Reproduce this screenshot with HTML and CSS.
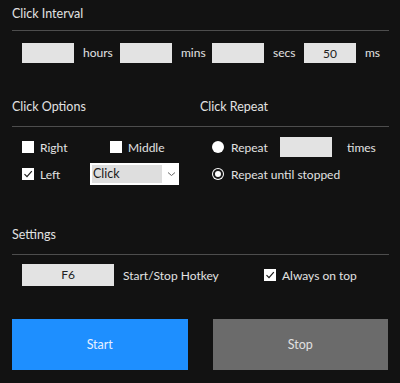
FILE: index.html
```html
<!DOCTYPE html>
<html lang="en">
<head>
    <meta charset="UTF-8">
    <meta name="viewport" content="width=device-width, initial-scale=1.0">
    <title>Auto Clicker</title>
    <link rel="stylesheet" href="styles.css">
</head>
<body>
    <div class="app">
        <div class="section-head head-first">
            <span>Click Interval</span>
        </div>

        <div class="interval-row">
            <input type="text" class="field">
            <span class="unit unit-hours">hours</span>
            <input type="text" class="field">
            <span class="unit unit-mins">mins</span>
            <input type="text" class="field">
            <span class="unit unit-secs">secs</span>
            <input type="text" class="field" value="50">
            <span class="unit">ms</span>
        </div>

        <div class="section-head head-split">
            <span class="col-left">Click Options</span>
            <span class="col-right">Click Repeat</span>
        </div>

        <div class="options">
            <div class="col-left options-col">
                <div class="opt-row row-top">
                    <label class="check check-right">
                        <span class="box"></span>
                        Right
                    </label>
                    <label class="check">
                        <span class="box"></span>
                        Middle
                    </label>
                </div>
                <div class="opt-row row-bottom">
                    <label class="check check-left">
                        <span class="box checked">
                            <svg width="12" height="12" viewBox="0 0 12 12"><polyline points="2.5,6.2 5,8.7 9.8,3.2" fill="none" stroke="#1a1a1a" stroke-width="1.2"/></svg>
                        </span>
                        Left
                    </label>
                    <div class="select">
                        <span class="select-value">Click</span>
                        <svg class="chevron" width="9" height="6" viewBox="0 0 9 6"><polyline points="1,1.5 4.5,4.5 8,1.5" fill="none" stroke="#666" stroke-width="1"/></svg>
                    </div>
                </div>
            </div>

            <div class="col-right options-col">
                <div class="opt-row row-top">
                    <label class="check check-repeat">
                        <span class="radio"></span>
                        Repeat
                    </label>
                    <input type="text" class="field">
                    <span class="unit-times">times</span>
                </div>
                <div class="opt-row row-bottom">
                    <label class="check">
                        <span class="radio selected"></span>
                        Repeat until stopped
                    </label>
                </div>
            </div>
        </div>

        <div class="section-head head-settings">
            <span>Settings</span>
        </div>

        <div class="settings-row">
            <div class="hotkey">F6</div>
            <span class="hotkey-label">Start/Stop Hotkey</span>
            <label class="check">
                <span class="box checked">
                    <svg width="12" height="12" viewBox="0 0 12 12"><polyline points="2.5,6.2 5,8.7 9.8,3.2" fill="none" stroke="#1a1a1a" stroke-width="1.2"/></svg>
                </span>
                Always on top
            </label>
        </div>

        <div class="buttons">
            <button class="btn btn-start">Start</button>
            <button class="btn btn-stop">Stop</button>
        </div>
    </div>
</body>
</html>
```

FILE: styles.css
```css
* {
    box-sizing: border-box;
    margin: 0;
    padding: 0;
    font-family: 'Lato', 'Noto Sans', sans-serif;
}

body {
    background-color: #121212;
    color: #e2e2e2;
    font-size: 12px;
    height: 100vh;
    overflow: hidden;
}

.app {
    padding: 0 11px 0 12px;
}

.section-head {
    display: flex;
    line-height: 17px;
    font-size: 12.5px;
    border-bottom: 1px solid #4d4d4d;
    padding-bottom: 11px;
}

.head-first {
    margin-top: 5px;
    padding-bottom: 8px;
}

.head-split {
    margin-top: 35px;
}

.head-settings {
    margin-top: 41px;
}

.col-left {
    width: 188px;
    flex-shrink: 0;
}

.col-right {
    flex: 1;
}

.field {
    width: 52px;
    height: 20px;
    border: none;
    background-color: #e3e3e3;
    color: #222;
    font-size: 12px;
    text-align: center;
    outline: none;
}

.interval-row {
    display: flex;
    align-items: center;
    margin-top: 12px;
    padding-left: 10px;
}

.unit {
    margin-left: 9px;
    line-height: 20px;
}

.unit-hours {
    width: 37px;
}

.unit-mins,
.unit-secs {
    width: 31px;
}

.options {
    display: flex;
    margin-top: 10px;
}

.options-col {
    display: flex;
    flex-direction: column;
}

.col-left.options-col {
    padding-left: 10px;
}

.col-right.options-col {
    padding-left: 12px;
}

.opt-row {
    display: flex;
    align-items: center;
}

.row-top {
    height: 20px;
}

.row-bottom {
    height: 22px;
    margin-top: 6px;
}

.check {
    display: flex;
    align-items: center;
    gap: 6px;
}

.check-right {
    width: 88px;
}

.check-left {
    width: 68px;
}

.check-repeat {
    width: 68px;
}

.box {
    width: 12px;
    height: 12px;
    background-color: #fff;
    display: flex;
}

.radio {
    width: 12px;
    height: 12px;
    border-radius: 50%;
    background-color: #fff;
    margin-right: 1px;
    display: flex;
    align-items: center;
    justify-content: center;
}

.radio.selected::after {
    content: "";
    width: 6px;
    height: 6px;
    border-radius: 50%;
    background-color: #fff;
    border: 2px solid #1a1a1a;
}

.select {
    width: 89px;
    height: 22px;
    background-color: #fff;
    padding: 2px;
    display: flex;
    align-items: center;
}

.select-value {
    width: 70px;
    height: 18px;
    line-height: 18px;
    background-color: #dedede;
    color: #1a1a1a;
    font-size: 12.5px;
    padding-left: 1px;
}

.chevron {
    margin-left: 5px;
}

.unit-times {
    margin-left: 15px;
}

.settings-row {
    display: flex;
    align-items: center;
    margin-top: 9px;
    padding-left: 10px;
}

.hotkey {
    width: 92px;
    height: 22px;
    line-height: 22px;
    background-color: #e3e3e3;
    color: #222;
    text-align: center;
}

.hotkey-label {
    margin-left: 9px;
    width: 141px;
}

.buttons {
    display: flex;
    gap: 25px;
    margin-top: 33px;
    padding-right: 1px;
}

.btn {
    flex: 1;
    height: 51px;
    border: none;
    font-size: 12.5px;
    cursor: pointer;
}

.btn-start {
    background-color: #1e8fff;
    color: #e6f0ff;
}

.btn-stop {
    background-color: #6b6b6b;
    color: #e0e0e0;
}
```
